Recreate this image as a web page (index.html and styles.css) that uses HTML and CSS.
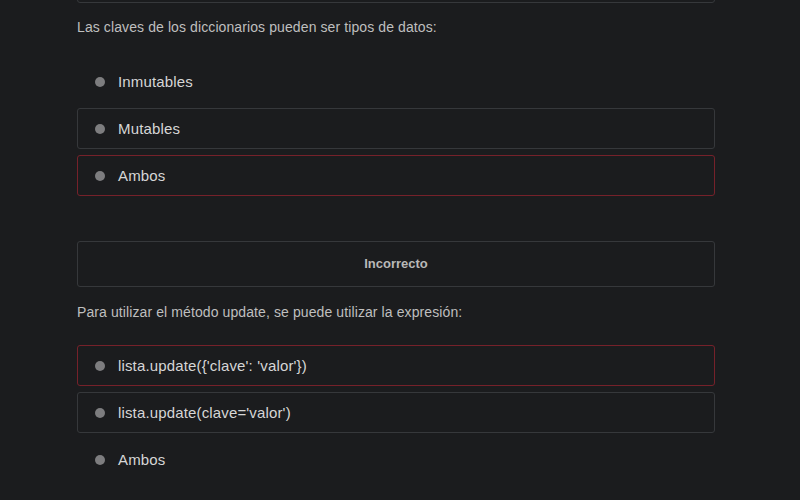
FILE: index.html
```html
<!DOCTYPE html>
<html lang="es">
<head>
<meta charset="utf-8">
<link rel="stylesheet" href="styles.css">
</head>
<body>
<div class="quiz">
  <div class="prev-card"></div>

  <p class="question q1">Las claves de los diccionarios pueden ser tipos de datos:</p>
  <ul class="options">
    <li class="option plain"><span class="dot"></span>Inmutables</li>
    <li class="option"><span class="dot"></span>Mutables</li>
    <li class="option wrong"><span class="dot"></span>Ambos</li>
  </ul>

  <div class="result">Incorrecto</div>

  <p class="question q2">Para utilizar el método update, se puede utilizar la expresión:</p>
  <ul class="options">
    <li class="option wrong"><span class="dot"></span>lista.update({'clave': 'valor'})</li>
    <li class="option"><span class="dot"></span>lista.update(clave='valor')</li>
    <li class="option plain"><span class="dot"></span>Ambos</li>
  </ul>
</div>
</body>
</html>
```

FILE: styles.css
```css
html, body {
  margin: 0;
  padding: 0;
  background: #1b1c1e;
  height: 500px;
  overflow: hidden;
}

body {
  font-family: "Liberation Sans", Arial, sans-serif;
}

.quiz {
  width: 638px;
  margin-left: 77px;
  display: flex;
  flex-direction: column;
}

.prev-card {
  margin-top: -36px;
  height: 39px;
  box-sizing: border-box;
  border: 1px solid #36383b;
  border-radius: 3px;
}

.question {
  margin: 0;
  font-size: 14px;
  line-height: 20px;
  letter-spacing: 0.1px;
  color: #bfbfbf;
}

.q1 { margin-top: 14px; }
.q2 { margin-top: 15px; }

.options {
  list-style: none;
  margin: 0;
  padding: 0;
  display: flex;
  flex-direction: column;
  gap: 6px;
}

.q1 + .options { margin-top: 24px; }
.q2 + .options { margin-top: 23px; }

.option {
  height: 41px;
  box-sizing: border-box;
  border: 1px solid #36383b;
  border-radius: 3px;
  display: flex;
  align-items: center;
  padding-left: 17px;
  font-size: 15px;
  letter-spacing: 0.15px;
  color: #d6d6d6;
}

.option.plain { border-color: transparent; }
.option.wrong { border-color: #76212a; }

.dot {
  width: 10px;
  height: 10px;
  border-radius: 50%;
  background: #7d7d7f;
  margin-right: 13px;
  flex: none;
}

.result {
  margin-top: 45px;
  height: 46px;
  box-sizing: border-box;
  border: 1px solid #36383b;
  border-radius: 3px;
  display: flex;
  align-items: center;
  justify-content: center;
  padding-bottom: 2px;
  font-size: 13px;
  font-weight: bold;
  color: #b8b8b8;
}
```
